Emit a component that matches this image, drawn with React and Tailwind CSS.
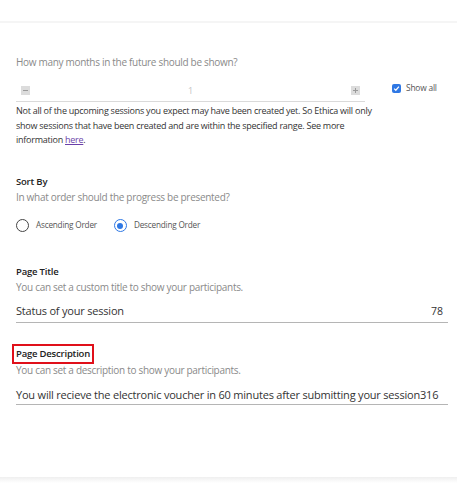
export default function App() {
  return (
    <div className="w-[457px] h-[500px] bg-white relative overflow-hidden" style={{ fontFamily: '"Open Sans", sans-serif' }}>
      <div className="h-[21px]" />
      <div className="h-[2px] bg-[#f5f5f5]" />
      <div className="pl-4 pr-[9px]">
        <div className="pt-[31px] text-[10px] tracking-[-0.3px] leading-[16px] text-[#8a8a8a] whitespace-nowrap">How many months in the future should be shown?</div>
        <div className="flex items-start mt-[10px]">
          <div className="w-[349px]">
            <div className="flex items-center justify-between h-[22px] pl-[5px] pr-[5px] border-b border-[#dadada]">
              <div className="w-[9px] h-[9px] bg-[#dcdcdc] flex items-center justify-center">
                <div className="w-[5px] h-[1px] bg-[#9a9a9a]" />
              </div>
              <div className="text-[9px] text-[#c4c4c4]">1</div>
              <div className="w-[9px] h-[9px] bg-[#dcdcdc] flex items-center justify-center relative">
                <div className="w-[5px] h-[1px] bg-[#9a9a9a]" />
                <div className="w-[1px] h-[5px] bg-[#9a9a9a] absolute" />
              </div>
            </div>
          </div>
          <div className="flex items-center ml-[27px] mt-[3px]">
            <div className="w-[9px] h-[9px] rounded-[2px] bg-[#2f78e4] flex items-center justify-center">
              <svg width="7" height="7" viewBox="0 0 8 8"><path d="M1.3 4.2 L3.2 6 L6.8 1.8" stroke="white" strokeWidth="1.4" fill="none" /></svg>
            </div>
            <span className="ml-[5px] text-[8.4px] tracking-[-0.2px] leading-[10px] text-[#555] whitespace-nowrap">Show all</span>
          </div>
        </div>
        <div className="mt-[2px] text-[9px] tracking-[-0.25px] leading-[14.5px] text-[#333] whitespace-nowrap">
          Not all of the upcoming sessions you expect may have been created yet. So Ethica will only<br />
          show sessions that have been created and are within the specified range. See more<br />
          information <span className="text-[#6a3fa8] underline">here</span>.
        </div>

        <div className="mt-[27px] text-[9.5px] tracking-[-0.2px] font-semibold text-[#222] leading-[14px]">Sort By</div>
        <div className="text-[10px] tracking-[-0.3px] leading-[16px] text-[#8a8a8a] whitespace-nowrap">In what order should the progress be presented?</div>
        <div className="flex items-center mt-[13px] h-[16px]">
          <div className="w-[13px] h-[13px] rounded-full border-[1.5px] border-[#444]" />
          <span className="ml-[7px] text-[8.2px] tracking-[-0.2px] text-[#555] whitespace-nowrap">Ascending Order</span>
          <div className="ml-[17px] w-[13px] h-[13px] rounded-full border-[1.5px] border-[#2f78e4] flex items-center justify-center">
            <div className="w-[6px] h-[6px] rounded-full bg-[#2f78e4]" />
          </div>
          <span className="ml-[7px] text-[8.2px] tracking-[-0.2px] text-[#555] whitespace-nowrap">Descending Order</span>
        </div>

        <div className="mt-[31px] text-[9.5px] tracking-[-0.2px] font-semibold text-[#222] leading-[14px]">Page Title</div>
        <div className="text-[10px] tracking-[-0.3px] leading-[16px] text-[#8a8a8a] whitespace-nowrap">You can set a custom title to show your participants.</div>
        <div className="mt-[5px] pt-[3px] pb-[3px] flex items-center justify-between border-b border-[#b5b5b5]">
          <span className="text-[11px] tracking-[-0.2px] leading-[16px] text-[#333] whitespace-nowrap">Status of your session</span>
          <span className="text-[10.5px] leading-[16px] text-[#333] mr-[5px]">78</span>
        </div>

        <div className="mt-[21px] -ml-[4px] inline-block border-2 border-[#e0101a] px-[2px] py-[1px] text-[9.5px] tracking-[-0.2px] font-semibold text-[#222] leading-[14px] whitespace-nowrap">Page Description</div>
        <div className="-mt-[1px] text-[10px] tracking-[-0.3px] leading-[14px] text-[#8a8a8a] whitespace-nowrap">You can set a description to show your participants.</div>
        <div className="mt-[10px] pb-[1px] flex items-center border-b border-[#b5b5b5]">
          <span className="text-[11px] tracking-[-0.2px] leading-[16px] text-[#333] whitespace-nowrap">You will recieve the electronic voucher in 60 minutes after submitting your session316</span>
        </div>
      </div>
      <div className="absolute left-0 right-0 top-[477px] h-[6px] bg-gradient-to-b from-[#efefef] to-white" />
    </div>
  );
}
